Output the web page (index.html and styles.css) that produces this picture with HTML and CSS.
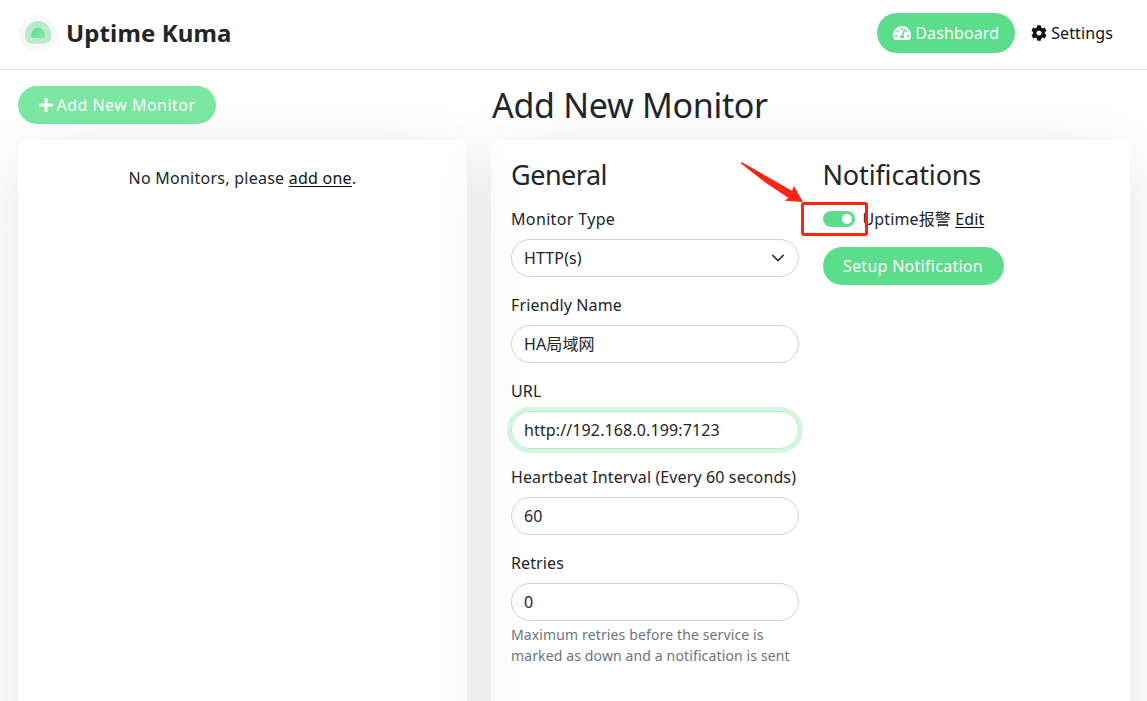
FILE: index.html
```html
<!DOCTYPE html>
<html lang="en">
<head>
<meta charset="utf-8">
<title>Uptime Kuma</title>
<link rel="stylesheet" href="styles.css">
</head>
<body>
<header class="header">
  <a class="brand">
    <svg class="logo" viewBox="0 0 40 40">
      <defs><linearGradient id="g" x1="0" y1="0" x2="1" y2="1"><stop offset="0" stop-color="#5cdd8b"/><stop offset="1" stop-color="#86e6a9"/></linearGradient></defs>
      <path fill="#f8f8f8" d="M20 2C30 2 39 11 39 22C39 32 31 38 20 38C9 38 1 32 1 22C1 11 10 2 20 2Z"/>
      <path fill="#b9ebca" d="M20 8C28 8 33 14.500 33.300 22C33.600 28 31 31 20 31C9 31 6.600 28 7 22C7.300 14.500 12 8 20 8Z"/>
      <path fill="url(#g)" d="M20 14.700C24 14.700 27 19 27 23C27 25 24.500 25 20 25C15.500 25 13 25.500 13 23C13 19 16 14.700 20 14.700Z"/>
    </svg>
    <span class="brand-name">Uptime Kuma</span>
  </a>
  <nav class="nav">
    <a class="nav-link active">
      <svg class="icon-gauge" viewBox="0 0 576 512"><path fill="currentColor" d="M288 32C128.940 32 0 160.940 0 320c0 52.800 14.250 102.260 39.060 144.800 5.610 9.620 16.300 15.200 27.440 15.200h443c11.140 0 21.830-5.580 27.440-15.200C561.750 422.260 576 372.800 576 320c0-159.060-128.940-288-288-288zm0 64c14.710 0 26.580 10.130 30.320 23.650-1.110 2.260-2.640 4.230-3.450 6.670l-9.220 27.670c-5.130 3.490-10.970 6.010-17.640 6.010-17.670 0-32-14.330-32-32S270.330 96 288 96zM96 384c-17.670 0-32-14.330-32-32s14.330-32 32-32 32 14.330 32 32-14.330 32-32 32zm48-160c-17.670 0-32-14.330-32-32s14.330-32 32-32 32 14.330 32 32-14.330 32-32 32zm246.770-72.410l-61.330 184C343.130 347.330 352 364.540 352 384c0 11.720-3.380 22.550-8.880 32H232.880c-5.500-9.450-8.880-20.280-8.880-32 0-33.940 26.500-61.430 59.900-63.590l61.340-184.010c4.170-12.560 17.730-19.450 30.360-15.170 12.570 4.190 19.350 17.790 15.170 30.360zm14.660 57.200l15.520-46.550c3.470-1.290 7.130-2.230 11.050-2.230 17.670 0 32 14.330 32 32s-14.330 32-32 32c-11.380-.01-20.890-6.280-26.570-15.220zM480 384c-17.670 0-32-14.330-32-32s14.330-32 32-32 32 14.330 32 32-14.330 32-32 32z"/></svg>
      <span>Dashboard</span>
    </a>
    <a class="nav-link">
      <svg class="icon-cog" viewBox="0 0 512 512"><path fill="currentColor" d="M487.400 315.700l-42.600-24.600c4.300-23.200 4.300-47 0-70.200l42.600-24.600c4.900-2.800 7.100-8.600 5.500-14-11.100-35.600-30-67.800-54.700-94.600-3.800-4.100-10-5.100-14.800-2.300L380.800 110c-17.900-15.400-38.500-27.300-60.800-35.100V25.800c0-5.600-3.900-10.500-9.400-11.700-36.700-8.200-74.300-7.800-109.200 0-5.500 1.200-9.400 6.100-9.400 11.700V75c-22.200 7.900-42.800 19.800-60.800 35.100L88.700 85.500c-4.900-2.800-11-1.900-14.800 2.300-24.700 26.700-43.600 58.900-54.700 94.600-1.700 5.400.6 11.200 5.500 14L67.300 221c-4.300 23.200-4.300 47 0 70.200l-42.600 24.600c-4.900 2.800-7.100 8.600-5.500 14 11.100 35.600 30 67.800 54.700 94.600 3.800 4.100 10 5.100 14.800 2.300l42.600-24.600c17.900 15.400 38.500 27.300 60.800 35.100v49.200c0 5.600 3.900 10.500 9.400 11.700 36.700 8.200 74.300 7.800 109.200 0 5.500-1.200 9.400-6.100 9.400-11.700v-49.200c22.200-7.900 42.800-19.800 60.800-35.100l42.600 24.600c4.900 2.800 11 1.900 14.800-2.300 24.700-26.700 43.600-58.900 54.700-94.600 1.500-5.500-.7-11.300-5.600-14.100zM256 336c-44.100 0-80-35.900-80-80s35.900-80 80-80 80 35.900 80 80-35.900 80-80 80z"/></svg>
      <span>Settings</span>
    </a>
  </nav>
</header>
<main class="main">
  <section class="sidebar">
    <a class="btn btn-add">
      <svg class="icon-plus" viewBox="0 0 448 512"><path fill="currentColor" d="M416 208H272V64c0-17.670-14.330-32-32-32h-32c-17.670 0-32 14.330-32 32v144H32c-17.670 0-32 14.330-32 32v32c0 17.670 14.330 32 32 32h144v144c0 17.670 14.330 32 32 32h32c17.670 0 32-14.330 32-32V304h144c17.670 0 32-14.330 32-32v-32c0-17.670-14.330-32-32-32z"/></svg>
      <span>Add New Monitor</span>
    </a>
    <div class="card"><p class="empty">No Monitors, please <a class="link">add one</a>.</p></div>
  </section>
  <section class="content">
    <h1 class="page-title">Add New Monitor</h1>
    <div class="card card-form">
      <form class="col">
        <h2 class="heading heading-general">General</h2>
        <div class="field"><label class="label label-type">Monitor Type</label>
          <div class="control select"><span>HTTP(s)</span><svg class="chevron" viewBox="0 0 16 16"><path fill="none" stroke="#343a40" stroke-linecap="round" stroke-linejoin="round" stroke-width="2" d="M2 5l6 6 6-6"/></svg></div></div>
        <div class="field"><label class="label">Friendly Name</label><div class="control">HA局域网</div></div>
        <div class="field"><label class="label">URL</label><div class="control focus">http://192.168.0.199:7123</div></div>
        <div class="field"><label class="label">Heartbeat Interval (Every 60 seconds)</label><div class="control">60</div></div>
        <div class="field"><label class="label">Retries</label><div class="control">0</div>
          <p class="hint">Maximum retries before the service is<br>marked as down and a notification is sent</p></div>
      </form>
      <div class="col">
        <h2 class="heading">Notifications</h2>
        <div class="switch-row"><span class="switch"></span><span>Uptime报警 <a class="link">Edit</a></span></div>
        <a class="btn btn-setup">Setup Notification</a>
      </div>
    </div>
  </section>
</main>
<svg class="annotation" viewBox="0 0 140 80">
  <path fill="#ff2314" d="M11.500 2L62 30.800L64 26L73 42L54.500 40.800L58.500 38L36 23L11 3.500Z"/>
  <rect x="72.500" y="43.500" width="64" height="31" rx="1.500" fill="none" stroke="#ff2314" stroke-width="3"/>
</svg>
</body>
</html>
```
FILE: styles.css
```css
* { box-sizing: border-box; }
body {
  margin: 0;
  height: 701px;
  overflow: hidden;
  position: relative;
  background: #fff;
  color: #212529;
  font: 16px/24px "Noto Sans", "Noto Sans CJK SC", sans-serif;
  letter-spacing: .12px;
}
h1, h2, p { margin: 0; font-weight: 400; }
.header {
  display: flex;
  justify-content: space-between;
  align-items: flex-start;
  height: 70px;
  padding: 13px 18px 0;
  border-bottom: 1px solid #dee2e6;
}
.brand { display: flex; align-items: center; height: 40px; gap: 8px; }
.logo { width: 40px; height: 40px; }
.brand-name { font-size: 24px; font-weight: 700; }
.nav { display: flex; }
.nav-link {
  display: flex;
  align-items: center;
  gap: 4px;
  height: 40px;
  padding: 0 16px;
  border-radius: 20px;
  color: #111;
}
.active { background: #5cdd8b; color: #fff; }
.icon-gauge { width: 18px; height: 16px; }
.icon-cog { width: 16px; height: 16px; }
.main { display: flex; gap: 24px; height: 631px; padding: 16px 17px 0 18px; overflow: hidden; }
.sidebar { width: 449px; }
.content { width: 639px; }
.btn {
  display: flex;
  align-items: center;
  justify-content: center;
  height: 38px;
  border-radius: 19px;
  background: #5cdd8b;
  color: #fff;
  letter-spacing: .28px;
}
.btn-add { width: 198px; margin-bottom: 16px; gap: 4px; background: #7ce8a4; letter-spacing: .47px; }
.icon-plus { width: 14px; height: 16px; }
.card {
  height: 700px;
  padding: 20px;
  border-radius: 10px;
  box-shadow: 0 15px 70px rgba(0, 0, 0, .1);
}
.empty { margin-top: 6px; text-align: center; letter-spacing: .25px; }
.link { color: #111; text-decoration: underline; text-underline-offset: 2px; }
.page-title { height: 54px; padding-left: 1px; font-size: 34px; line-height: 38px; letter-spacing: -.3px; }
.card-form { display: grid; grid-template-columns: 1fr 1fr; gap: 24px; }
.heading { height: 47px; font-size: 27px; line-height: 30px; letter-spacing: -.15px; }
.heading-general { letter-spacing: -.5px; }
.field { margin-bottom: 16px; }
.label { display: block; margin-bottom: 8px; }
.label-type { letter-spacing: .35px; }
.control {
  display: flex;
  align-items: center;
  height: 38px;
  padding: 0 13px 0 12px;
  border: 1px solid #ced4da;
  border-radius: 19px;
}
.select { justify-content: space-between; }
.chevron { width: 14px; height: 14px; }
.focus { border-color: #aeeec5; box-shadow: 0 0 0 4px #d6f5e1; }
.hint { margin-top: 3px; font-size: 14px; line-height: 21px; color: #6c757d; white-space: nowrap; letter-spacing: .13px; }
.switch-row { display: flex; align-items: center; height: 24px; gap: 8px; margin-bottom: 16px; }
.switch { display: flex; justify-content: flex-end; width: 32px; height: 16px; padding: 3px; border-radius: 8px; background: #5cdd8b; }
.switch::after { content: ""; width: 10px; height: 10px; border-radius: 50%; background: #fff; }
.btn-setup { width: 181px; }
.annotation { position: absolute; left: 730px; top: 160px; width: 140px; height: 80px; }
```
